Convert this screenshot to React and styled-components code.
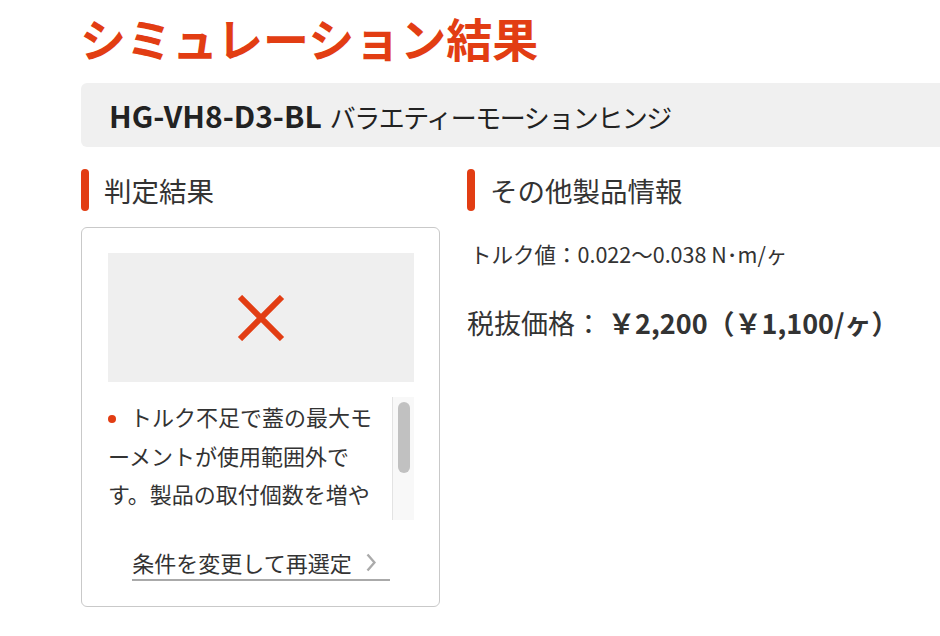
import React from "react";
import styled, { createGlobalStyle } from "styled-components";

const ACCENT = "#e23d13";

const Global = createGlobalStyle`
  html, body { margin: 0; padding: 0; background: #fff; }
  body { font-family: "Noto Sans CJK JP", "Noto Sans", sans-serif; color: #333; overflow: hidden; }
`;

const Page = styled.div`
  width: 940px;
  height: 636px;
  box-sizing: border-box;
  padding: 14px 0 0 80px;
  overflow: hidden;
`;

const Title = styled.h1`
  margin: 0;
  font-size: 46px;
  line-height: 46px;
  font-weight: 700;
  color: ${ACCENT};
`;

const ProductBar = styled.div`
  margin-top: 23px;
  margin-left: 1px;
  height: 64px;
  width: 900px;
  box-sizing: border-box;
  background: #f0f0f0;
  border-radius: 6px;
  display: flex;
  align-items: center;
  padding-left: 28px;
  gap: 8px;
  color: #222;
`;

const Code = styled.span`
  font-size: 30px;
  font-weight: 700;
  line-height: 1;
`;

const Name = styled.span`
  font-size: 26px;
  font-weight: 400;
  line-height: 1;
  letter-spacing: -1.5px;
  position: relative;
  top: 2px;
`;

const Columns = styled.div`
  display: flex;
  gap: 27px;
  margin-top: 22px;
  margin-left: 1px;
`;

const Column = styled.section`
  width: ${(p) => p.$w}px;
  display: flex;
  flex-direction: column;
`;

const Heading = styled.h2`
  margin: 0;
  display: flex;
  align-items: center;
  gap: 15px;
  height: 42px;
  font-size: 27.5px;
  font-weight: 400;
  color: #333;
  &::before {
    content: "";
    width: 8px;
    height: 42px;
    border-radius: 4px;
    background: ${ACCENT};
    flex: none;
  }
`;

const Card = styled.div`
  margin-top: 16px;
  border: 1px solid #c9c9c9;
  border-radius: 6px;
  padding: 25px 25px 25px 26px;
  display: flex;
  flex-direction: column;
  align-items: stretch;
`;

const Judge = styled.div`
  height: 129px;
  background: #efefef;
  display: flex;
  align-items: center;
  justify-content: center;
`;

const ScrollArea = styled.div`
  margin-top: 15px;
  height: 123px;
  display: flex;
`;

const Viewport = styled.div`
  flex: 1;
  overflow: hidden;
  padding-right: 12px;
  font-size: 22px;
  line-height: 38.5px;
  color: #333;
  line-break: loose;
`;

const Track = styled.div`
  flex: none;
  width: 22px;
  box-sizing: border-box;
  background: #f8f8f8;
  border-left: 1px solid #e3e3e3;
  padding: 5px 4px 0 5px;
`;

const Thumb = styled.div`
  height: 71px;
  border-radius: 6px;
  background: #c1c1c1;
`;

const Message = styled.p`
  margin: 0;
`;

const Dot = styled.span`
  display: inline-block;
  width: 8px;
  height: 8px;
  border-radius: 50%;
  background: ${ACCENT};
  margin: 0 14px 0 0;
  vertical-align: 3px;
`;

const LinkRow = styled.div`
  margin-top: 27px;
  display: flex;
  justify-content: center;
`;

const Link = styled.a`
  display: inline-flex;
  align-items: center;
  gap: 14px;
  padding: 0 14px 2px 0;
  border-bottom: 2px solid #aaa;
  font-size: 22px;
  line-height: 30px;
  color: #333;
  text-decoration: none;
  cursor: pointer;
`;

const Info = styled.p`
  margin: ${(p) => p.$mt}px 0 0 ${(p) => p.$ml}px;
  font-size: ${(p) => p.$size}px;
  line-height: 1.5;
  color: #333;
  white-space: nowrap;
`;

const Strong = styled.strong`
  font-weight: 700;
`;

const Cross = () => (
  <svg width="48" height="46" viewBox="0 0 48 46">
    <path d="M3 2 L45 44 M45 2 L3 44" stroke={ACCENT} strokeWidth="6" fill="none" />
  </svg>
);

const Chevron = () => (
  <svg width="10" height="19" viewBox="0 0 10 19">
    <polyline points="1.5,1.5 8.5,9.5 1.5,17.5" stroke="#aaa" strokeWidth="2.4" fill="none" />
  </svg>
);

export default function App() {
  return (
    <>
      <Global />
      <Page>
        <Title>シミュレーション結果</Title>
        <ProductBar>
          <Code>HG-VH8-D3-BL</Code>
          <Name>バラエティーモーションヒンジ</Name>
        </ProductBar>
        <Columns>
          <Column $w={359}>
            <Heading>判定結果</Heading>
            <Card>
              <Judge>
                <Cross />
              </Judge>
              <ScrollArea>
                <Viewport>
                  <Message>
                    <Dot />
                    トルク不足で蓋の最大モーメントが使用範囲外です。製品の取付個数を増やすか、トルク値の大きい製品を選択してください。
                  </Message>
                </Viewport>
                <Track>
                  <Thumb />
                </Track>
              </ScrollArea>
              <LinkRow>
                <Link>
                  条件を変更して再選定
                  <Chevron />
                </Link>
              </LinkRow>
            </Card>
          </Column>
          <Column $w={460}>
            <Heading>その他製品情報</Heading>
            <Info $mt={27} $ml={3} $size={21.5}>
              トルク値：0.022〜0.038 N･m/ヶ
            </Info>
            <Info $mt={33} $ml={0} $size={27}>
              税抜価格： <Strong>￥2,200（￥1,100/ヶ）</Strong>
            </Info>
          </Column>
        </Columns>
      </Page>
    </>
  );
}
